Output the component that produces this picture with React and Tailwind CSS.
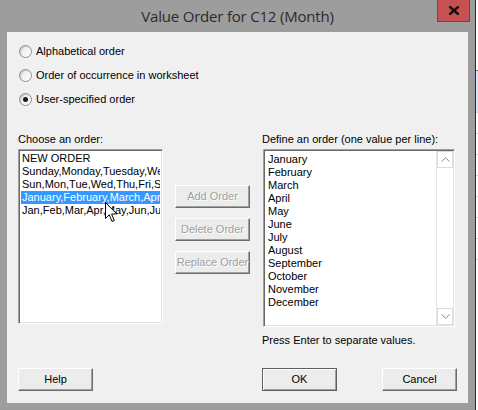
import { useState } from "react";

const font = "font-['Liberation_Sans',Arial,sans-serif]";

const orders = [
  "NEW ORDER",
  "Sunday,Monday,Tuesday,Wednesday,Thursday,Friday,Saturday",
  "Sun,Mon,Tue,Wed,Thu,Fri,Sat",
  "January,February,March,April,May,June,July,August,September,October,November,December",
  "Jan,Feb,Mar,Apr,May,Jun,Jul,Aug,Sep,Oct,Nov,Dec",
];

const months = [
  "January", "February", "March", "April", "May", "June",
  "July", "August", "September", "October", "November", "December",
];

function Radio({ label, checked }) {
  return (
    <div className="h-[24px] flex items-center pl-[12px]">
      <span className="w-[13px] h-[13px] rounded-full border border-[#8e8f8f] bg-gradient-to-br from-[#e6e6e6] to-white shadow-[inset_1px_1px_1px_rgba(0,0,0,0.15)] flex items-center justify-center">
        {checked && <span className="w-[5px] h-[5px] rounded-full bg-[#1b1b1b]" />}
      </span>
      <span className="ml-[4px] text-[11px] text-black leading-[13px]">{label}</span>
    </div>
  );
}

function WinButton({ children, disabled, isDefault, className = "" }) {
  return (
    <button
      className={
        "h-[23px] w-[75px] bg-[#ececec] text-[11px] leading-[13px] flex items-center justify-center " +
        (isDefault
          ? "border border-[#5e5e5e] shadow-[inset_1px_1px_0_#fff,inset_-1px_-1px_0_#a0a0a0] text-black "
          : "border border-t-white border-l-white border-r-[#6d6d6d] border-b-[#6d6d6d] shadow-[inset_-1px_-1px_0_#a0a0a0] ") +
        (disabled ? "text-[#a0a0a0] [text-shadow:1px_1px_0_#fff] " : "text-black ") +
        className
      }
    >
      {children}
    </button>
  );
}

function Chevron({ up }) {
  return (
    <svg width="9" height="5" viewBox="0 0 9 5" fill="none">
      <path
        d={up ? "M0.5 4.5 L4.5 0.8 L8.5 4.5" : "M0.5 0.5 L4.5 4.2 L8.5 0.5"}
        stroke="#8a8a8a"
        strokeWidth="1"
      />
    </svg>
  );
}

function Cursor() {
  return (
    <svg
      className="absolute left-[105px] top-[202px]"
      width="13"
      height="21"
      viewBox="0 0 13 21"
    >
      <path
        d="M0.5 0.5 L0.5 16.5 L4.3 12.8 L7 19.5 L9.3 18.5 L6.6 12 L11.8 12 Z"
        fill="#fff"
        stroke="#000"
        strokeWidth="1"
        strokeLinejoin="miter"
      />
    </svg>
  );
}

export default function App() {
  const [selected] = useState(3);

  return (
    <div className={"w-[478px] h-[410px] flex bg-white overflow-hidden relative " + font}>
      <div className="w-[475px] h-full bg-[#9d9d9d] flex flex-col">
        <div className="h-[32px] relative flex items-center justify-center">
          <span className="text-[15px] text-[#2b2b2b] font-['Open_Sans',sans-serif] tracking-[-0.2px] pt-[1px]">
            Value Order for C12 (Month)
          </span>
          <div className="absolute right-[5px] top-0 w-[33px] h-[22px] bg-[#c75050] border border-t-0 border-[#8a3a3a] flex items-center justify-center">
            <svg width="10" height="9" viewBox="0 0 10 9">
              <path d="M1 1 L9 8 M9 1 L1 8" stroke="#111" strokeWidth="2.4" strokeLinecap="square" />
            </svg>
          </div>
        </div>

        <div className="flex-1 mx-[7px] mb-[7px] bg-[#f0f0f0] flex flex-col pt-[7px]">
          <Radio label="Alphabetical order" />
          <Radio label="Order of occurrence in worksheet" />
          <Radio label="User-specified order" checked />

          <div className="flex mt-[22px] pl-[11px] text-[11px] leading-[13px] text-black">
            <div className="w-[145px] flex flex-col">
              <div className="h-[14px]">Choose an order:</div>
              <div className="mt-[2px] h-[175px] bg-white border border-t-[#a0a0a0] border-l-[#a0a0a0] border-r-white border-b-white shadow-[inset_1px_1px_0_#696969,inset_-1px_-1px_0_#e3e3e3] pt-[2px] px-[2px] overflow-hidden">
                {orders.map((o, i) => (
                  <div
                    key={o}
                    className={
                      "h-[13px] whitespace-nowrap overflow-hidden pl-[1px] " +
                      (i === selected ? "bg-[#3399ff] text-white" : "")
                    }
                  >
                    {o}
                  </div>
                ))}
              </div>
            </div>

            <div className="ml-[12px] w-[75px] flex flex-col pt-[52px] gap-[10px]">
              <WinButton disabled className="h-[22px]">Add Order</WinButton>
              <WinButton disabled className="h-[22px]">Delete Order</WinButton>
              <WinButton disabled className="h-[22px]">Replace Order</WinButton>
            </div>

            <div className="ml-[12px] w-[193px] flex flex-col">
              <div className="h-[14px]">Define an order (one value per line):</div>
              <div className="mt-[2px] ml-[1px] h-[178px] bg-white border border-t-[#a0a0a0] border-l-[#a0a0a0] border-r-white border-b-white shadow-[inset_1px_1px_0_#696969,inset_-1px_-1px_0_#e3e3e3] flex p-[1px]">
                <div className="flex-1 pt-[2px] pl-[3px]">
                  {months.map((m) => (
                    <div key={m} className="h-[13px]">{m}</div>
                  ))}
                </div>
                <div className="w-[17px] flex flex-col border-l border-[#e6e6e6] bg-white">
                  <div className="h-[17px] border border-[#dcdcdc] flex items-center justify-center">
                    <Chevron up />
                  </div>
                  <div className="flex-1" />
                  <div className="h-[17px] border border-[#dcdcdc] flex items-center justify-center">
                    <Chevron />
                  </div>
                </div>
              </div>
              <div className="mt-[7px] h-[14px]">Press Enter to separate values.</div>
            </div>
          </div>

          <div className="mt-auto mb-[12px] pl-[11px] flex">
            <WinButton>Help</WinButton>
            <WinButton isDefault className="ml-[169px]">OK</WinButton>
            <WinButton className="ml-[45px]">Cancel</WinButton>
          </div>
        </div>
      </div>
      <div className="w-[1px] h-full bg-[#2a2a2a]" />
      <div className="flex-1 h-full bg-white flex flex-col">
        <div className="h-[70px]" />
        <div className="h-[42px] bg-[#dce8f7] border-t border-[#6b6b6b]" />
        <div className="h-[21px] border-t border-[#d4d4d4]" />
        <div className="h-[21px] border-t border-[#d4d4d4]" />
        <div className="h-[21px] border-t border-[#d4d4d4]" />
        <div className="h-[21px] border-t border-[#d4d4d4]" />
        <div className="h-[21px] border-t border-[#d4d4d4]" />
        <div className="h-[21px] border-t border-[#d4d4d4]" />
        <div className="h-[21px] border-t border-[#d4d4d4]" />
        <div className="h-[21px] border-t border-[#d4d4d4]" />
      </div>
      <Cursor />
    </div>
  );
}
